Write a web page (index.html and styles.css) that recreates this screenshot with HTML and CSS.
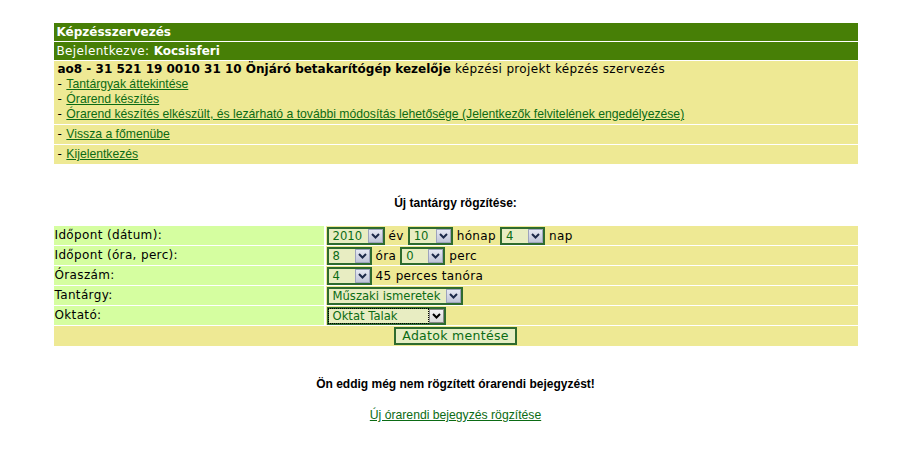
FILE: index.html
```html
<!DOCTYPE html>
<html lang="hu">
<head>
    <meta charset="UTF-8">
    <title>Képzésszervezés</title>
    <link rel="stylesheet" href="styles.css">
</head>
<body>
    <div class="page">
        <div class="menu">
            <div class="bar"><b>Képzésszervezés</b></div>
            <div class="bar">Bejelentkezve: <b>Kocsisferi</b></div>
            <div class="box">
                <div><b>ao8 - 31 521 19 0010 31 10 Önjáró betakarítógép kezelője</b> képzési projekt képzés szervezés</div>
                <div>- <a href="#">Tantárgyak áttekintése</a></div>
                <div>- <a href="#">Órarend készítés</a></div>
                <div>- <a href="#">Órarend készítés elkészült, és lezárható a további módosítás lehetősége (Jelentkezők felvitelének engedélyezése)</a></div>
            </div>
            <div class="box row">- <a href="#">Vissza a főmenübe</a></div>
            <div class="box row">- <a href="#">Kijelentkezés</a></div>
        </div>

        <h3 class="title">Új tantárgy rögzítése:</h3>

        <form class="form">
            <div class="lbl">Időpont (dátum):</div>
            <div class="val">
                <span class="sel w58"><span class="sel-txt">2010</span><span class="arr"><svg width="9" height="6" viewBox="0 0 9 6"><path d="M1 1 L4.5 4.5 L8 1" fill="none" stroke="#1d2a4a" stroke-width="2"/></svg></span></span>
                év
                <span class="sel w45"><span class="sel-txt">10</span><span class="arr"><svg width="9" height="6" viewBox="0 0 9 6"><path d="M1 1 L4.5 4.5 L8 1" fill="none" stroke="#1d2a4a" stroke-width="2"/></svg></span></span>
                hónap
                <span class="sel w45"><span class="sel-txt">4</span><span class="arr"><svg width="9" height="6" viewBox="0 0 9 6"><path d="M1 1 L4.5 4.5 L8 1" fill="none" stroke="#1d2a4a" stroke-width="2"/></svg></span></span>
                nap
            </div>
            <div class="lbl">Időpont (óra, perc):</div>
            <div class="val">
                <span class="sel w45"><span class="sel-txt">8</span><span class="arr"><svg width="9" height="6" viewBox="0 0 9 6"><path d="M1 1 L4.5 4.5 L8 1" fill="none" stroke="#1d2a4a" stroke-width="2"/></svg></span></span>
                óra
                <span class="sel w45"><span class="sel-txt">0</span><span class="arr"><svg width="9" height="6" viewBox="0 0 9 6"><path d="M1 1 L4.5 4.5 L8 1" fill="none" stroke="#1d2a4a" stroke-width="2"/></svg></span></span>
                perc
            </div>
            <div class="lbl">Óraszám:</div>
            <div class="val">
                <span class="sel w45"><span class="sel-txt">4</span><span class="arr"><svg width="9" height="6" viewBox="0 0 9 6"><path d="M1 1 L4.5 4.5 L8 1" fill="none" stroke="#1d2a4a" stroke-width="2"/></svg></span></span>
                45 perces tanóra
            </div>
            <div class="lbl">Tantárgy:</div>
            <div class="val">
                <span class="sel w136"><span class="sel-txt">Műszaki ismeretek</span><span class="arr"><svg width="9" height="6" viewBox="0 0 9 6"><path d="M1 1 L4.5 4.5 L8 1" fill="none" stroke="#1d2a4a" stroke-width="2"/></svg></span></span>
            </div>
            <div class="lbl">Oktató:</div>
            <div class="val">
                <span class="sel w119 focus"><span class="sel-txt">Oktat Talak</span><span class="arr"><svg width="9" height="6" viewBox="0 0 9 6"><path d="M1 1 L4.5 4.5 L8 1" fill="none" stroke="#000" stroke-width="2"/></svg></span></span>
            </div>
            <div class="submit-row">
                <button type="button" class="btn">Adatok mentése</button>
            </div>
        </form>

        <p class="notice">Ön eddig még nem rögzített órarendi bejegyzést!</p>
        <p class="new-link"><a href="#">Új órarendi bejegyzés rögzítése</a></p>
    </div>
</body>
</html>
```

FILE: styles.css
```css
body {
    margin: 0;
    padding: 23px 0 0;
    background: #ffffff;
    font-family: "DejaVu Sans", Verdana, sans-serif;
    font-size: 12px;
    letter-spacing: 0.35px;
    color: #000;
}
b {
    letter-spacing: 0;
}
.page {
    width: 804px;
    margin: 0 auto;
}
.menu {
    display: flex;
    flex-direction: column;
    gap: 1px;
}
.bar {
    background-color: #477f06;
    color: #fff;
    height: 18px;
    line-height: 18px;
    padding-left: 3px;
}
.box {
    background-color: #eee994;
    padding: 1px 4px 2px;
    line-height: 15px;
}
.box.row {
    height: 19px;
    padding-top: 2px;
    padding-bottom: 0;
    line-height: 15px;
    box-sizing: border-box;
}
.menu .box.row:first-of-type {
    margin-top: 1px;
}
a {
    font-family: "Liberation Sans", Arial, sans-serif;
    font-size: 12.2px;
    letter-spacing: 0;
    color: #0b6b14;
    text-decoration: underline;
}
.title {
    font-family: "Liberation Sans", Arial, sans-serif;
    font-size: 12px;
    letter-spacing: 0;
    font-weight: bold;
    text-align: center;
    margin: 32px 0 16px;
}
.form {
    display: grid;
    grid-template-columns: 270px 1fr;
    gap: 1px 2px;
    margin: 0;
}
.lbl {
    background-color: #d5fea0;
    height: 19px;
    line-height: 18px;
    padding-left: 1px;
}
.val {
    background-color: #eee994;
    height: 19px;
    display: flex;
    align-items: center;
    gap: 4px;
    padding-left: 1px;
}
.sel {
    display: inline-flex;
    align-items: center;
    justify-content: space-between;
    box-sizing: border-box;
    height: 18px;
    border: 2px solid #2e6b2e;
    background-color: #e8edc2;
    color: #0b6b14;
    font-size: 11.6px;
    letter-spacing: 0;
    padding-left: 4px;
    padding-right: 0;
}
.sel-txt {
    line-height: 14px;
    white-space: nowrap;
}
.arr {
    width: 15px;
    height: 14px;
    box-sizing: border-box;
    border: 1px solid #9da3bd;
    background: linear-gradient(#e6e9f3, #bfc4d8);
    display: flex;
    align-items: center;
    justify-content: center;
}
.w58 { width: 58px; }
.w45 { width: 45px; }
.w136 { width: 136px; }
.w119 { width: 119px; }
.sel.focus {
    padding-left: 0;
}
.sel.focus .sel-txt {
    outline: 1px dotted #000;
    outline-offset: 0;
    flex: 1;
    margin-right: 1px;
    padding-left: 4px;
}
.sel.focus .arr {
    background: linear-gradient(#f4f4f4, #d9d9d9);
    border-color: #888;
}
.submit-row {
    grid-column: 1 / 3;
    background-color: #eee994;
    height: 20px;
    display: flex;
    justify-content: center;
    align-items: center;
}
.btn {
    font-family: "DejaVu Sans", Verdana, sans-serif;
    font-size: 12.5px;
    letter-spacing: 0.3px;
    color: #0b6b14;
    background-color: #e6eec4;
    border: 2px solid #2e6b2e;
    height: 18px;
    width: 123px;
    padding: 0;
    line-height: 14px;
}
.notice {
    font-family: "Liberation Sans", Arial, sans-serif;
    font-size: 12px;
    letter-spacing: 0;
    font-weight: bold;
    text-align: center;
    margin: 31px 0 17px;
}
.new-link {
    text-align: center;
    margin: 0;
}
```
